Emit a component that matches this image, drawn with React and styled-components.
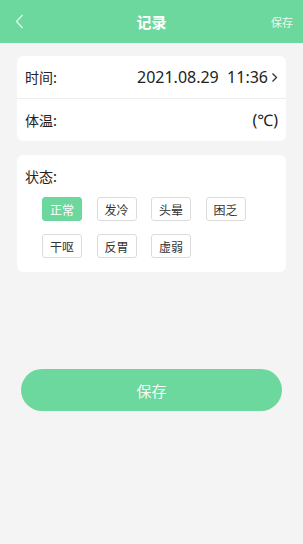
import React from "react";
import styled, { createGlobalStyle } from "styled-components";

const GlobalStyle = createGlobalStyle`
  html, body {
    margin: 0;
    padding: 0;
    background: #f5f4f4;
    font-family: "Noto Sans CJK SC", "Noto Sans", sans-serif;
  }
`;

const Page = styled.div`
  width: 303px;
  height: 544px;
  background: #f5f4f4;
  display: flex;
  flex-direction: column;
`;

const Header = styled.div`
  height: 43px;
  background: #6dd89e;
  display: grid;
  grid-template-columns: 60px 1fr 60px;
  align-items: center;
  color: #fff;
`;

const Back = styled.div`
  padding-left: 15px;
  display: flex;
  align-items: center;
`;

const Title = styled.div`
  text-align: center;
  font-size: 15px;
  font-weight: bold;
`;

const HeaderAction = styled.div`
  text-align: right;
  padding-right: 10px;
  font-size: 11px;
  color: #eefaf3;
`;

const Content = styled.div`
  padding: 13px 17px 0 17px;
  display: flex;
  flex-direction: column;
`;

const Card = styled.div`
  background: #fff;
  border-radius: 6px;
  margin-bottom: ${(p) => p.gapBelow || 0}px;
`;

const Row = styled.div`
  height: 42px;
  display: flex;
  align-items: center;
  justify-content: space-between;
  padding: 0 8px;
  font-size: 14px;
  color: #222;
  border-bottom: ${(p) => (p.divider ? "1px solid #eeeeee" : "none")};
`;

const Value = styled.div`
  display: flex;
  align-items: center;
  gap: 3px;
  font-family: "Noto Sans", "Noto Sans CJK SC", sans-serif;
  font-size: 16px;
  color: #222;
`;

const StateCard = styled(Card)`
  padding: 11px 8px 14px 8px;
`;

const Label = styled.div`
  font-size: 14px;
  color: #222;
  margin-bottom: 11px;
`;

const Tags = styled.div`
  display: grid;
  grid-template-columns: repeat(4, 40px);
  column-gap: 14.5px;
  row-gap: 13px;
  padding-left: 17px;
`;

const Tag = styled.div`
  height: 24px;
  box-sizing: border-box;
  border-radius: 3px;
  display: flex;
  align-items: center;
  justify-content: center;
  font-size: 12px;
  color: ${(p) => (p.active ? "#fff" : "#333")};
  background: ${(p) => (p.active ? "#6dd89e" : "#fff")};
  border: 1px solid ${(p) => (p.active ? "#6dd89e" : "#dcdcdc")};
`;

const SaveButton = styled.button`
  margin: 97px 21px 0 21px;
  height: 42px;
  border: none;
  border-radius: 21px;
  background: #6dd89e;
  color: #f2fbf6;
  font-size: 15px;
  font-family: "Noto Sans CJK SC", sans-serif;
`;

const tags = ["正常", "发冷", "头晕", "困乏", "干呕", "反胃", "虚弱"];

export default function App() {
  return (
    <Page>
      <GlobalStyle />
      <Header>
        <Back>
          <svg width="9" height="15" viewBox="0 0 9 15" fill="none">
            <path d="M7.5 1 L1.5 7.5 L7.5 14" stroke="#e8f8ef" strokeWidth="1.2" />
          </svg>
        </Back>
        <Title>记录</Title>
        <HeaderAction>保存</HeaderAction>
      </Header>
      <Content>
        <Card gapBelow={14}>
          <Row divider>
            <span>时间:</span>
            <Value>
              2021.08.29&nbsp;&nbsp;11:36
              <svg width="7" height="11" viewBox="0 0 7 11" fill="none">
                <path d="M1.5 1.5 L5.5 5.5 L1.5 9.5" stroke="#333" strokeWidth="1.3" />
              </svg>
            </Value>
          </Row>
          <Row>
            <span>体温:</span>
            <Value>(℃)</Value>
          </Row>
        </Card>
        <StateCard>
          <Label>状态:</Label>
          <Tags>
            {tags.map((t, i) => (
              <Tag key={t} active={i === 0}>
                {t}
              </Tag>
            ))}
          </Tags>
        </StateCard>
      </Content>
      <SaveButton>保存</SaveButton>
    </Page>
  );
}
